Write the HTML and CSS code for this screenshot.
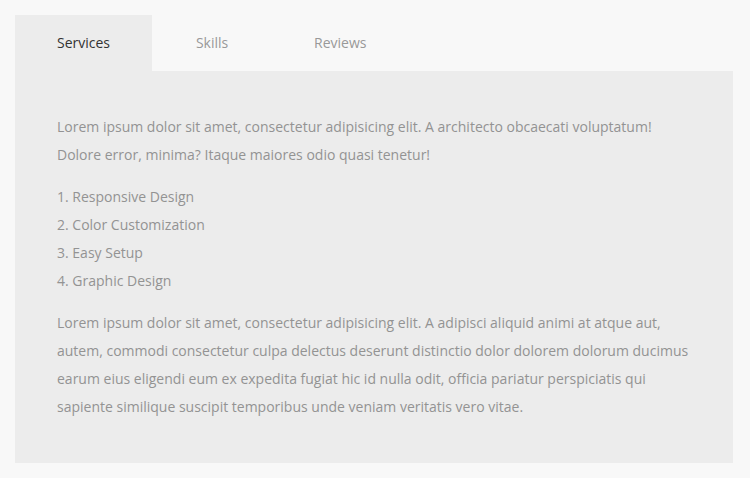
FILE: index.html
```html
<!DOCTYPE html>
<html>
<head>
<meta charset="utf-8">
<link rel="stylesheet" href="styles.css">
</head>
<body>
<div class="tabs">
  <div class="tab-bar">
    <div class="tab active">Services</div>
    <div class="tab">Skills</div>
    <div class="tab">Reviews</div>
  </div>
  <div class="panel">
    <p>Lorem ipsum dolor sit amet, consectetur adipisicing elit. A architecto obcaecati voluptatum! Dolore error, minima? Itaque maiores odio quasi tenetur!</p>
    <ul class="list">
      <li>1. Responsive Design</li>
      <li>2. Color Customization</li>
      <li>3. Easy Setup</li>
      <li>4. Graphic Design</li>
    </ul>
    <p>Lorem ipsum dolor sit amet, consectetur adipisicing elit. A adipisci aliquid animi at atque aut, autem, commodi consectetur culpa delectus deserunt distinctio dolor dolorem dolorum ducimus earum eius eligendi eum ex expedita fugiat hic id nulla odit, officia pariatur perspiciatis qui sapiente similique suscipit temporibus unde veniam veritatis vero vitae.</p>
  </div>
</div>
</body>
</html>
```
FILE: styles.css
```css
html, body {
  margin: 0;
  padding: 0;
  background: #f8f8f8;
}
body {
  font-family: "Open Sans", sans-serif;
  font-size: 14px;
  color: #939393;
  padding: 15px 17px 15px 15px;
}
.tabs {
  display: flex;
  flex-direction: column;
}
.tab-bar {
  display: flex;
}
.tab {
  min-width: 120px;
  box-sizing: border-box;
  text-align: center;
  height: 56px;
  line-height: 56px;
  padding: 0 42px;
  font-size: 14px;
  color: #999;
}
.tab.active {
  background: #ececec;
  color: #333;
}
.panel {
  background: #ececec;
  padding: 42px;
}
.panel p {
  margin: 0;
  line-height: 28px;
}
.list {
  list-style: none;
  margin: 14px 0;
  padding: 0;
  line-height: 28px;
}
```
